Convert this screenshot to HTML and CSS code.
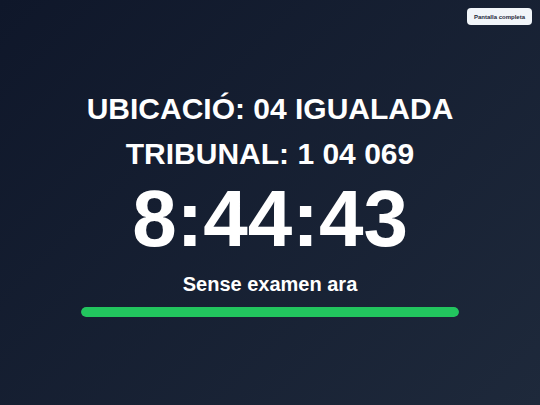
FILE: index.html
```html
<!DOCTYPE html>
<html lang="ca">
<head>
<meta charset="utf-8">
<title>Rellotge</title>
<link rel="stylesheet" href="styles.css">
</head>
<body>
<button class="fullscreen-btn" type="button">Pantalla completa</button>
<main class="screen">
  <div class="panel">
    <h1 class="heading">
      <span class="heading-line">UBICACIÓ: 04 IGUALADA</span>
      <span class="heading-line">TRIBUNAL: 1 04 069</span>
    </h1>
    <div class="clock">8:44:43</div>
    <div class="status">Sense examen ara</div>
    <div class="progress"><div class="progress-fill" style="width:100%"></div></div>
  </div>
</main>
</body>
</html>
```
FILE: styles.css
```css
html, body {
  margin: 0;
  padding: 0;
  height: 100%;
}
body {
  background: linear-gradient(135deg, #0f172a 0%, #1e293b 100%);
  color: #ffffff;
  font-family: "Liberation Sans", Arial, sans-serif;
  overflow: hidden;
}
.fullscreen-btn {
  position: fixed;
  top: 8px;
  right: 8px;
  width: 65px;
  height: 17px;
  padding: 0;
  border: none;
  border-radius: 4px;
  background: #f1f5f9;
  color: #1e293b;
  font-family: "Liberation Sans", Arial, sans-serif;
  font-size: 6px;
  font-weight: 700;
}
.screen {
  min-height: 100vh;
  display: flex;
  align-items: center;
  justify-content: center;
  padding-bottom: 2px;
  box-sizing: border-box;
}
.panel {
  width: 378px;
  display: flex;
  flex-direction: column;
  align-items: center;
}
.heading {
  margin: 0;
  display: flex;
  flex-direction: column;
  align-items: center;
  font-size: 30px;
  line-height: 45px;
  font-weight: 700;
  white-space: nowrap;
}
.clock {
  margin-top: 3px;
  font-size: 80px;
  line-height: 80px;
  font-weight: 700;
}
.status {
  margin-top: 11px;
  font-size: 20px;
  line-height: 28px;
  font-weight: 700;
}
.progress {
  margin-top: 9px;
  width: 100%;
  height: 10px;
  border-radius: 5px;
  background: #334155;
  overflow: hidden;
}
.progress-fill {
  height: 100%;
  border-radius: 5px;
  background: #22c55e;
}
```
